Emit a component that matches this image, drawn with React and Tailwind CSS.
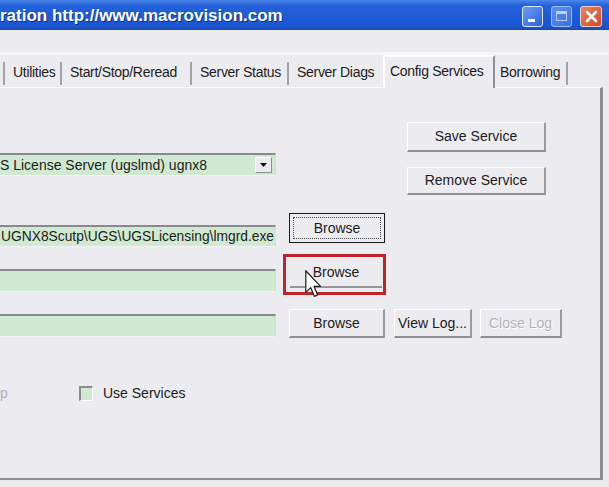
import React from "react";

const font = "font-['Liberation_Sans',Arial,sans-serif]";

function Btn({ children, className = "", disabled = false }) {
  return (
    <div
      className={`flex items-center justify-center bg-[#ecebef] border-t border-l border-t-white border-l-white border-r-2 border-b-2 border-r-[#9b9b9f] border-b-[#8f8f93] text-[14px] leading-[17px] ${
        disabled ? "text-[#b4b4b8]" : "text-[#1c1c1c]"
      } ${className}`}
    >
      {children}
    </div>
  );
}

function Field({ children, className = "" }) {
  return (
    <div
      className={`w-[276px] bg-[#d0e9d0] border-t-2 border-t-[#8a8a8e] border-b border-b-[#f4f4f4] border-r border-r-[#dcdcdc] flex items-center overflow-hidden whitespace-nowrap text-[14px] leading-[17px] text-[#1c1c1c] ${className}`}
    >
      {children}
    </div>
  );
}

function Sep() {
  return <div className="w-[2px] h-[23px] self-end mb-[2px] bg-[#a3a3a7] shrink-0" />;
}

function Tab({ label, w, pl }) {
  return (
    <div
      className="h-full flex items-end shrink-0 overflow-hidden whitespace-nowrap"
      style={{ width: w, paddingLeft: pl }}
    >
      <span className="mb-[6px] text-[14px] leading-[17px] tracking-[-0.3px] text-[#1c1c1c]">{label}</span>
    </div>
  );
}

export default function App() {
  return (
    <div className={`relative w-[609px] h-[487px] overflow-hidden bg-[#ecebef] ${font}`}>
      {/* title bar */}
      <div className="h-[30px] flex items-center bg-[linear-gradient(180deg,#4a86ea_0%,#2463da_18%,#1d5ad5_60%,#1b55cc_90%,#1648b5_100%)]">
        <span className="text-white font-bold text-[17px] leading-[20px] whitespace-nowrap mt-[1px] [text-shadow:1px_1px_0_#0b2f8a]">
          ration http://www.macrovision.com
        </span>
        <div className="ml-auto flex items-center gap-[8px] mr-[7px] mt-[2px]">
          <div className="w-[21px] h-[21px] rounded-[3px] border border-[#dfe8fb] bg-[linear-gradient(135deg,#6f9df2,#2a61dc)] flex items-end pl-[5px] pb-[4px]">
            <div className="w-[7px] h-[3px] bg-white" />
          </div>
          <div className="w-[21px] h-[21px] rounded-[3px] border border-[#9fbcf2] bg-[linear-gradient(135deg,#5d8fec,#3a70df)] flex items-center justify-center">
            <div className="w-[11px] h-[10px] border border-[#b9cdf6] border-t-[3px]" />
          </div>
          <div className="w-[22px] h-[21px] rounded-[3px] border border-[#f3d2c4] bg-[linear-gradient(135deg,#e9825e,#d9472a)] flex items-center justify-center">
            <svg width="13" height="13" viewBox="0 0 13 13">
              <path d="M2 2 L11 11 M11 2 L2 11" stroke="white" strokeWidth="2.6" strokeLinecap="round" />
            </svg>
          </div>
        </div>
      </div>

      {/* band above tabs */}
      <div className="h-[22px]" />
      <div className="h-[3px] bg-[#f7f7f9]" />

      {/* tab strip */}
      <div className="h-[32px] flex items-stretch">
        <div className="w-[3px] shrink-0" />
        <Sep />
        <Tab label="Utilities" w={55} pl={8} />
        <Sep />
        <Tab label="Start/Stop/Reread" w={128} pl={8} />
        <Sep />
        <Tab label="Server Status" w={95} pl={8} />
        <Sep />
        <Tab label="Server Diags" w={94} pl={8} />
        <div className="w-[112px] shrink-0 h-[33px] -mb-[1px] border-t-2 border-l-2 border-t-white border-l-white border-r-2 border-r-[#8f8f93] bg-[#ecebef] relative z-10 flex items-start pl-[5px] pt-[6px] whitespace-nowrap overflow-hidden">
          <span className="text-[14px] leading-[17px] tracking-[-0.3px] text-[#1c1c1c]">Config Services</span>
        </div>
        <Tab label="Borrowing" w={71} pl={5} />
        <Sep />
      </div>

      {/* tab panel */}
      <div className="w-[603px] h-[393px] border-t border-t-white border-r-[3px] border-r-[#8e8e92] border-b-2 border-b-[#8e8e92] flex flex-col">
        {/* service name + save/remove */}
        <div className="mt-[34px] flex">
          <div className="w-[276px] pt-[31px]">
            <Field className="h-[23px]">
              <span className="flex-1">S License Server (ugslmd) ugnx8</span>
              <div className="w-[17px] h-[16px] mr-[3px] bg-[#ecebef] border-t border-l border-white border-r border-b border-r-[#8f8f93] border-b-[#8f8f93] flex items-center justify-center">
                <svg width="7" height="4" viewBox="0 0 7 4">
                  <path d="M0 0 H7 L3.5 4 Z" fill="#111" />
                </svg>
              </div>
            </Field>
          </div>
          <div className="ml-[131px] flex flex-col gap-[15px]">
            <Btn className="w-[139px] h-[30px]">Save Service</Btn>
            <Btn className="w-[139px] h-[28px]">Remove Service</Btn>
          </div>
        </div>

        {/* lmgrd path */}
        <div className="mt-[18px] flex items-start">
          <Field className="h-[22px] mt-[12px] justify-end pr-[1px]">
            <span className="text-[13.8px]">UGNX8Scutp\UGS\UGSLicensing\lmgrd.exe</span>
          </Field>
          <div className="ml-[13px] w-[96px] h-[30px] border border-[#1a1a1a] bg-[#ecebef] p-[3px]">
            <div className="w-full h-full border border-dotted border-[#444] flex items-center justify-center text-[14px] leading-[17px] text-[#1c1c1c]">
              Browse
            </div>
          </div>
        </div>

        {/* license file path */}
        <div className="mt-[7px] flex items-start">
          <Field className="h-[23px] mt-[15px]" />
          <div className="ml-[7px] w-[103px] h-[41px] border-[3px] border-[#c0222b] pl-[4px] pt-[1px]">
            <div className="w-[92px] h-[30px] border-b-2 border-b-[#96969a] flex items-center justify-center text-[14px] leading-[17px] text-[#1c1c1c]">
              Browse
            </div>
          </div>
        </div>

        {/* debug log path */}
        <div className="mt-[14px] flex items-start">
          <Field className="h-[23px] mt-[5px]" />
          <Btn className="ml-[13px] w-[96px] h-[29px]">Browse</Btn>
          <Btn className="ml-[9px] w-[78px] h-[29px]">View Log...</Btn>
          <Btn className="ml-[8px] w-[82px] h-[29px] [text-shadow:1px_1px_0_#fff]" disabled>
            Close Log
          </Btn>
        </div>

        {/* options */}
        <div className="mt-[48px] h-[15px] flex items-center">
          <span className="w-[79px] text-[14px] leading-[17px] text-[#b2b2b6]">p</span>
          <div className="w-[14px] h-[15px] bg-[#d3e8d3] border-t-2 border-l-2 border-t-[#8c8c90] border-l-[#8c8c90] border-b border-r border-white" />
          <span className="ml-[10px] text-[14px] leading-[17px] text-[#1c1c1c]">Use Services</span>
        </div>
      </div>

      {/* mouse pointer */}
      <svg className="absolute left-[305px] top-[270px]" width="17" height="28" viewBox="0 0 12 20">
        <path
          d="M0.5 0.5 L0.5 16 L4 12.6 L6.6 18.8 L9 17.8 L6.4 11.7 L11 11.7 Z"
          fill="white"
          stroke="#222"
          strokeWidth="0.9"
          strokeLinejoin="round"
        />
      </svg>
    </div>
  );
}
